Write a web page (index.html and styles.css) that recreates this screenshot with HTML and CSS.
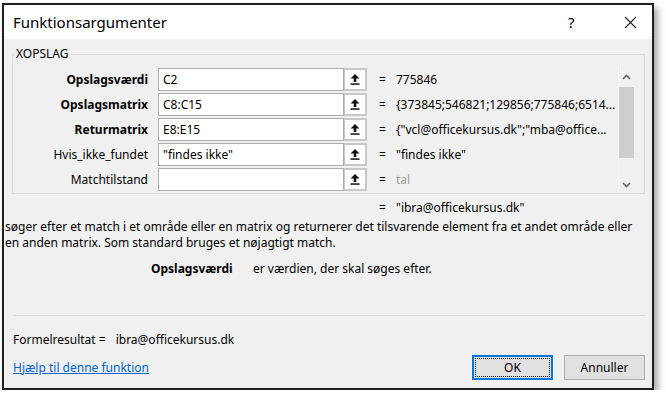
FILE: index.html
```html
<!DOCTYPE html>
<html lang="da">
<head>
  <meta charset="UTF-8">
  <meta name="viewport" content="width=device-width, initial-scale=1.0">
  <title>Funktionsargumenter</title>
  <link rel="stylesheet" href="styles.css">
</head>
<body>
  <div class="dialog">
    <div class="titlebar">
      <span class="title">Funktionsargumenter</span>
      <span class="title-help">?</span>
      <span class="title-close">
        <svg width="13" height="13" viewBox="0 0 13 13"><path d="M1 1 L12 12 M12 1 L1 12" stroke="#222" stroke-width="1.1" fill="none"/></svg>
      </span>
    </div>

    <fieldset class="func">
      <legend>XOPSLAG</legend>
      <div class="args">
        <div class="arg-list">
          <div class="arg">
            <label class="arg-name req">Opslagsværdi</label>
            <input class="arg-field" type="text" value="C2" readonly>
            <span class="ref-btn"><svg width="10" height="11" viewBox="0 0 10 11"><path d="M5 0 L9.5 4.5 L6.3 4.5 L6.3 8 L3.7 8 L3.7 4.5 L0.5 4.5 Z" fill="#111"/><rect x="0.5" y="9.3" width="9" height="1.5" fill="#111"/></svg></span>
            <span class="eq">=</span>
            <span class="arg-value">775846</span>
          </div>
          <div class="arg">
            <label class="arg-name req">Opslagsmatrix</label>
            <input class="arg-field" type="text" value="C8:C15" readonly>
            <span class="ref-btn"><svg width="10" height="11" viewBox="0 0 10 11"><path d="M5 0 L9.5 4.5 L6.3 4.5 L6.3 8 L3.7 8 L3.7 4.5 L0.5 4.5 Z" fill="#111"/><rect x="0.5" y="9.3" width="9" height="1.5" fill="#111"/></svg></span>
            <span class="eq">=</span>
            <span class="arg-value">{373845;546821;129856;775846;6514...</span>
          </div>
          <div class="arg">
            <label class="arg-name req">Returmatrix</label>
            <input class="arg-field" type="text" value="E8:E15" readonly>
            <span class="ref-btn"><svg width="10" height="11" viewBox="0 0 10 11"><path d="M5 0 L9.5 4.5 L6.3 4.5 L6.3 8 L3.7 8 L3.7 4.5 L0.5 4.5 Z" fill="#111"/><rect x="0.5" y="9.3" width="9" height="1.5" fill="#111"/></svg></span>
            <span class="eq">=</span>
            <span class="arg-value">{"vcl@officekursus.dk";"mba@office...</span>
          </div>
          <div class="arg">
            <label class="arg-name">Hvis_ikke_fundet</label>
            <input class="arg-field" type="text" value="&quot;findes ikke&quot;" readonly>
            <span class="ref-btn"><svg width="10" height="11" viewBox="0 0 10 11"><path d="M5 0 L9.5 4.5 L6.3 4.5 L6.3 8 L3.7 8 L3.7 4.5 L0.5 4.5 Z" fill="#111"/><rect x="0.5" y="9.3" width="9" height="1.5" fill="#111"/></svg></span>
            <span class="eq">=</span>
            <span class="arg-value">"findes ikke"</span>
          </div>
          <div class="arg">
            <label class="arg-name">Matchtilstand</label>
            <input class="arg-field" type="text" value="" readonly>
            <span class="ref-btn"><svg width="10" height="11" viewBox="0 0 10 11"><path d="M5 0 L9.5 4.5 L6.3 4.5 L6.3 8 L3.7 8 L3.7 4.5 L0.5 4.5 Z" fill="#111"/><rect x="0.5" y="9.3" width="9" height="1.5" fill="#111"/></svg></span>
            <span class="eq">=</span>
            <span class="arg-value muted">tal</span>
          </div>
        </div>
        <div class="scrollbar">
          <span class="scroll-arrow"><svg width="9" height="6" viewBox="0 0 9 6"><path d="M1 5 L4.5 1.5 L8 5" stroke="#606060" stroke-width="1.6" fill="none"/></svg></span>
          <div class="scroll-track"><div class="scroll-thumb"></div></div>
          <span class="scroll-arrow"><svg width="9" height="6" viewBox="0 0 9 6"><path d="M1 1 L4.5 4.5 L8 1" stroke="#606060" stroke-width="1.6" fill="none"/></svg></span>
        </div>
      </div>
    </fieldset>

    <div class="result-line"><span class="eq">=</span><span>"ibra@officekursus.dk"</span></div>
    <p class="desc">søger efter et match i et område eller en matrix og returnerer det tilsvarende element fra et andet område eller en anden matrix. Som standard bruges et nøjagtigt match.</p>
    <p class="arg-help"><b class="arg-help-name">Opslagsværdi</b><span>er værdien, der skal søges efter.</span></p>

    <div class="separator"></div>

    <div class="formula">Formelresultat =<span class="formula-value">ibra@officekursus.dk</span></div>

    <div class="footer">
      <a href="#" class="help-link">Hjælp til denne funktion</a>
      <div class="buttons">
        <button class="btn btn-ok"><span class="focus-ring">OK</span></button>
        <button class="btn">Annuller</button>
      </div>
    </div>
  </div>
</body>
</html>
```

FILE: styles.css
```css
body {
  margin: 0;
  background-color: #ffffff;
  font-family: "Noto Sans", "Open Sans", sans-serif;
  font-size: 12px;
  color: #000000;
}

.dialog {
  box-sizing: border-box;
  width: 652px;
  height: 387px;
  margin: 3px 0 0 2px;
  background-color: #f0f0f0;
  border: 2px solid #1e1e1e;
  box-shadow: 4px 5px 7px rgba(0, 0, 0, 0.35);
  display: flex;
  flex-direction: column;
}

/* title bar */
.titlebar {
  height: 34px;
  flex-shrink: 0;
  background-color: #ffffff;
  display: flex;
  align-items: center;
  padding-left: 9px;
}

.title {
  font-size: 15px;
  flex: 1;
}

.title-help {
  font-size: 15px;
  width: 20px;
  margin-right: 36px;
}

.title-close {
  width: 28px;
  display: flex;
}

/* arguments box */
.func {
  margin: 7px 7px 0 8px;
  padding: 4px 10px 0 0;
  border: 1px solid #dcdcdc;
  min-width: 0;
}

.func legend {
  padding: 0 2px;
  margin-left: 1px;
  line-height: 16px;
}

.args {
  display: flex;
  height: 127px;
  overflow: hidden;
}

.arg-list {
  flex: 1;
  padding-top: 2px;
}

.arg {
  display: flex;
  align-items: center;
  height: 23px;
  margin-bottom: 2px;
}

.arg-name {
  width: 135px;
  text-align: right;
  margin-right: 10px;
  flex-shrink: 0;
}

.arg-name.req {
  font-weight: bold;
}

.arg-field {
  box-sizing: border-box;
  width: 186px;
  height: 23px;
  margin: 0;
  padding: 0 4px;
  border: 1px solid #adadad;
  background-color: #ffffff;
  font-family: inherit;
  font-size: 12px;
  outline: none;
}

.ref-btn {
  box-sizing: border-box;
  width: 23px;
  height: 23px;
  border: 2px solid #c8c8c8;
  border-left-width: 1px;
  background-color: #ffffff;
  display: flex;
  align-items: center;
  justify-content: center;
}

.eq {
  width: 17px;
  margin-left: 12px;
  flex-shrink: 0;
}

.arg-value {
  white-space: nowrap;
  overflow: hidden;
}

.arg-value.muted {
  color: #a0a0a0;
}

.scrollbar {
  box-sizing: border-box;
  width: 16px;
  border-left: 1px solid #ffffff;
  display: flex;
  flex-direction: column;
  padding-top: 2px;
}

.scroll-arrow {
  height: 17px;
  display: flex;
  align-items: center;
  justify-content: center;
}

.scroll-track {
  flex: 1;
}

.scroll-thumb {
  height: 71px;
  margin-top: 2px;
  background-color: #cdcdcd;
}

/* description */
.result-line {
  margin-top: 6px;
  padding-left: 375px;
  line-height: 16px;
  display: flex;
}

.result-line .eq {
  margin-left: 0;
}

.desc {
  margin: 3px 10px 0 1px;
  line-height: 16px;
}

.arg-help {
  margin: 10px 0 0 147px;
  line-height: 16px;
}

.arg-help-name {
  display: inline-block;
  width: 102px;
}

.separator {
  margin: 38px 7px 0 9px;
  border-top: 1px solid #dcdcdc;
}

.formula {
  margin: 16px 0 0 9px;
  line-height: 16px;
}

.formula-value {
  margin-left: 10px;
}

/* footer */
.footer {
  margin: 7px 7px 0 9px;
  display: flex;
  align-items: center;
  justify-content: space-between;
}

.help-link {
  color: #0066cc;
}

.buttons {
  display: flex;
  gap: 11px;
}

.btn {
  box-sizing: border-box;
  width: 81px;
  height: 25px;
  margin: 0;
  padding: 0;
  background-color: #e1e1e1;
  border: 1px solid #adadad;
  font-family: inherit;
  font-size: 12px;
  color: #000000;
}

.btn-ok {
  border: 2px solid #0078d7;
  padding: 1px;
}

.focus-ring {
  display: block;
  height: 100%;
  box-sizing: border-box;
  border: 1px dotted #000000;
  line-height: 17px;
}
```
